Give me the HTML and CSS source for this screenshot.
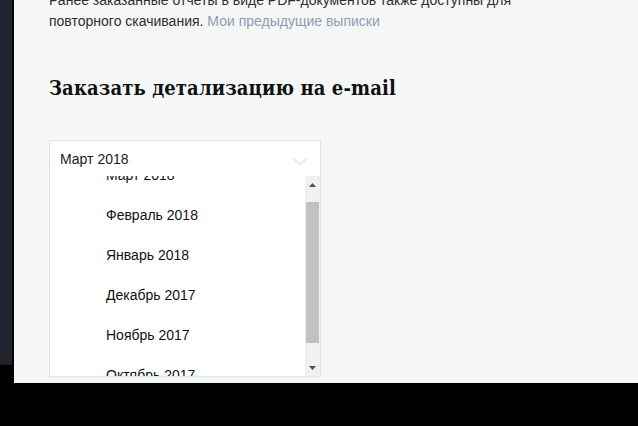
FILE: index.html
```html
<!DOCTYPE html>
<html lang="ru">
<head>
<meta charset="utf-8">
<link rel="stylesheet" href="styles.css">
</head>
<body>
<div class="screen">
  <div class="sidebar"></div>
  <main class="panel">
    <p class="intro">Ранее заказанные отчеты в виде PDF-документов также доступны для повторного скачивания. <a class="link" href="#">Мои предыдущие выписки</a></p>
    <h2 class="title">Заказать детализацию на e-mail</h2>
    <div class="select">
      <div class="select-head">
        <span class="select-value">Март 2018</span>
        <svg class="chev" width="16" height="12" viewBox="0 0 16 12"><circle cx="8.5" cy="1" r="0.8" fill="#eef3f4"/><path d="M1.5 4.5 L8 10.5 L14.5 4.5" fill="none" stroke="#e2ecef" stroke-width="2"/></svg>
      </div>
      <div class="list">
        <div class="options">
          <div class="options-inner">
            <div class="opt">Март 2018</div>
            <div class="opt">Февраль 2018</div>
            <div class="opt">Январь 2018</div>
            <div class="opt">Декабрь 2017</div>
            <div class="opt">Ноябрь 2017</div>
            <div class="opt">Октябрь 2017</div>
          </div>
        </div>
        <div class="scrollbar">
          <div class="sb-btn"><svg width="7" height="4" viewBox="0 0 7 4"><path d="M0 4 L3.5 0 L7 4Z" fill="#505050"/></svg></div>
          <div class="sb-track"><div class="sb-thumb"></div></div>
          <div class="sb-btn"><svg width="7" height="4" viewBox="0 0 7 4"><path d="M0 0 L3.5 4 L7 0Z" fill="#505050"/></svg></div>
        </div>
      </div>
    </div>
  </main>
</div>
</body>
</html>
```
FILE: styles.css
```css
html, body {
  margin: 0;
  padding: 0;
  background: #000;
  height: 426px;
  overflow: hidden;
}
.screen {
  display: flex;
  align-items: flex-start;
  gap: 2px;
}
.sidebar {
  width: 12px;
  height: 365px;
  background: #20232b;
  flex: none;
}
.panel {
  width: 624px;
  height: 383px;
  background: #f5f7f7;
  padding-left: 35px;
  box-sizing: border-box;
  overflow: hidden;
  font-family: "Liberation Sans", Arial, sans-serif;
}
.intro {
  margin: -10px 0 0 0;
  width: 475px;
  font-size: 14px;
  line-height: 21px;
  color: #2e2e2e;
}
.link {
  color: #8b9db3;
  text-decoration: none;
}
.title {
  margin: 43px 0 0 0;
  font-family: "DejaVu Serif Condensed", "DejaVu Serif", serif;
  font-weight: bold;
  font-size: 20px;
  letter-spacing: 0.12px;
  line-height: 26px;
  color: #111;
}
.select {
  margin-top: 39px;
  width: 272px;
  border: 1px solid #dfe5ea;
  background: #fff;
  box-sizing: border-box;
}
.select-head {
  height: 35px;
  display: flex;
  align-items: center;
  justify-content: space-between;
  padding: 0 12px 0 10px;
}
.select-value {
  font-size: 14px;
  color: #1a1a1a;
}
.chev {
  margin-top: 2px;
}
.list {
  display: flex;
  height: 200px;
}
.options {
  flex: 1;
  overflow: hidden;
}
.options-inner {
  margin-top: -21px;
}
.opt {
  height: 40px;
  display: flex;
  align-items: center;
  padding-left: 56px;
  font-size: 14px;
  color: #111;
}
.scrollbar {
  width: 15px;
  background: #f0f0f0;
  display: flex;
  flex-direction: column;
}
.sb-btn {
  height: 17px;
  display: flex;
  align-items: center;
  justify-content: center;
}
.sb-track {
  flex: 1;
  padding: 9px 1px 16px 1px;
}
.sb-thumb {
  height: 100%;
  background: #c1c1c1;
}
```
